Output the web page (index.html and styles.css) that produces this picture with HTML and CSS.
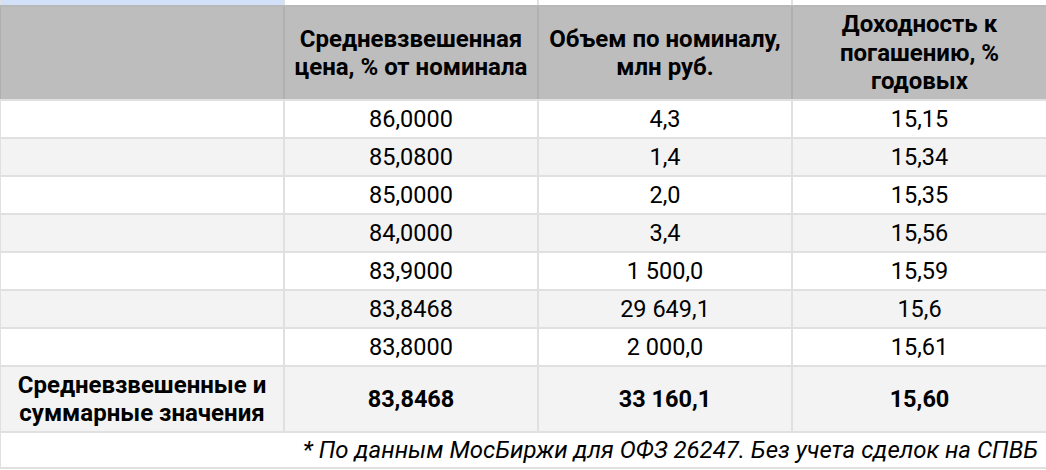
FILE: index.html
```html
<!DOCTYPE html>
<html lang="ru">
<head>
<meta charset="utf-8">
<title>Таблица</title>
<link rel="stylesheet" href="styles.css">
</head>
<body>
<table class="grid">
  <colgroup>
    <col class="c1">
    <col class="c2">
    <col class="c3">
    <col class="c4">
  </colgroup>
  <tr class="prev">
    <td class="sel"></td><td></td><td></td><td></td>
  </tr>
  <tr class="head">
    <th></th>
    <th>Средневзвешенная цена, % от номинала</th>
    <th>Объем по номиналу, млн руб.</th>
    <th>Доходность к погашению, % годовых</th>
  </tr>
  <tr class="row"><td></td><td>86,0000</td><td>4,3</td><td>15,15</td></tr>
  <tr class="row alt"><td></td><td>85,0800</td><td>1,4</td><td>15,34</td></tr>
  <tr class="row"><td></td><td>85,0000</td><td>2,0</td><td>15,35</td></tr>
  <tr class="row alt"><td></td><td>84,0000</td><td>3,4</td><td>15,56</td></tr>
  <tr class="row"><td></td><td>83,9000</td><td>1 500,0</td><td>15,59</td></tr>
  <tr class="row alt"><td></td><td>83,8468</td><td>29 649,1</td><td>15,6</td></tr>
  <tr class="row"><td></td><td>83,8000</td><td>2 000,0</td><td>15,61</td></tr>
  <tr class="total alt">
    <td>Средневзвешенные и суммарные значения</td>
    <td>83,8468</td><td>33 160,1</td><td>15,60</td>
  </tr>
  <tr class="note">
    <td colspan="4">* По данным МосБиржи для ОФЗ 26247. Без учета сделок на СПВБ</td>
  </tr>
</table>
</body>
</html>
```

FILE: styles.css
```css
html, body {
  margin: 0;
  padding: 0;
  background: #ffffff;
}

body {
  font-family: Roboto, "Liberation Sans", sans-serif;
  color: #000000;
}

.grid {
  border-collapse: collapse;
  table-layout: fixed;
  width: 1047px;
  margin-left: -1px;
}

.c1 { width: 284px; }
.c2 { width: 254px; }
.c3 { width: 254px; }
.c4 { width: 255px; }

.grid td,
.grid th {
  border: 2px solid #e0e0e0;
  padding: 0 6px;
  text-align: center;
  vertical-align: middle;
  overflow: hidden;
}

.prev td {
  height: 5px;
  padding: 0;
  font-size: 0;
  line-height: 0;
  border-top: 0;
  border-bottom-color: #b8b8b8;
}

.prev .sel {
  background: #d3e1f8;
}

.head th {
  height: 92px;
  background: #bdbdbd;
  font-size: 24px;
  font-weight: 700;
  line-height: 28.5px;
  border-color: #b0b0b0;
  border-bottom-color: #e0e0e0;
}

.row td {
  height: 36px;
  font-size: 23.5px;
  line-height: 28px;
}

.alt td {
  background: #f3f3f3;
}

.total td {
  height: 64px;
  font-size: 23.5px;
  font-weight: 700;
  line-height: 28px;
}

.total td:first-child {
  font-size: 24px;
  padding: 0 2px;
}

.note td {
  height: 34px;
  text-align: right;
  font-style: italic;
  font-size: 24px;
  line-height: 28px;
  padding-right: 8px;
}
```
